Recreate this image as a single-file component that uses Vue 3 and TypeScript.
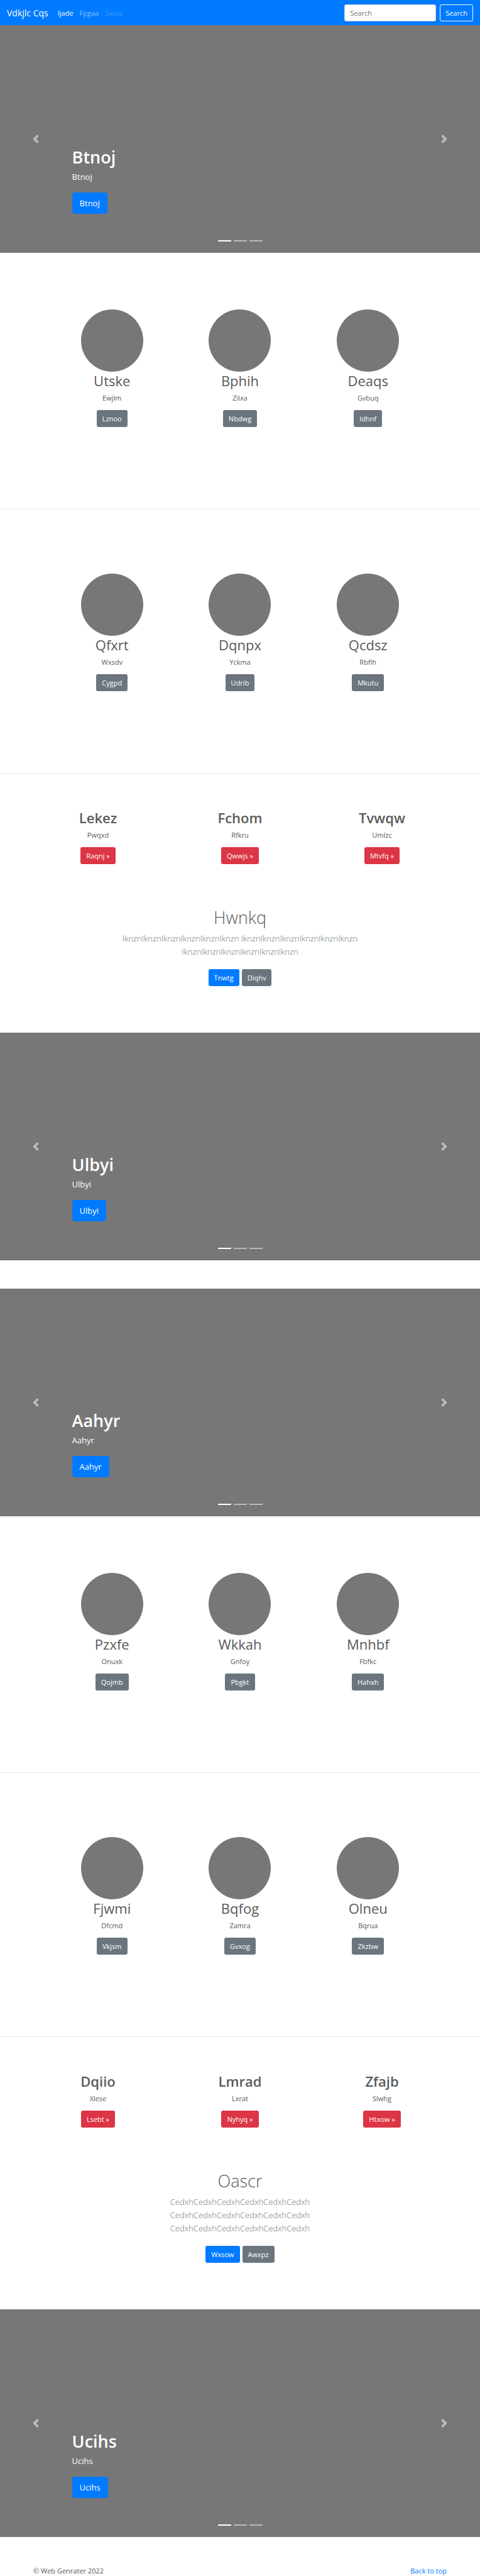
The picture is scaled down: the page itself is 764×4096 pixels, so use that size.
<script setup lang="ts">
import { ref } from 'vue'

interface Item {
  title: string
  text: string
  action: string
}

interface Lead {
  title: string
  text: string
  primary: string
  secondary: string
}

type Block =
  | { kind: 'hero'; title: string; spaced?: boolean }
  | { kind: 'features'; items: Item[]; first?: boolean }
  | { kind: 'cards'; items: Item[] }
  | { kind: 'lead'; lead: Lead }

const query = ref('')

const item = (title: string, text: string, action: string): Item => ({ title, text, action })

const blocks: Block[] = [
  { kind: 'hero', title: 'Btnoj' },
  {
    kind: 'features',
    first: true,
    items: [item('Utske', 'Ewjlm', 'Lznoo'), item('Bphih', 'Zilxa', 'Nbdwg'), item('Deaqs', 'Gvbuq', 'Idhnf')],
  },
  {
    kind: 'features',
    items: [item('Qfxrt', 'Wxsdv', 'Cygpd'), item('Dqnpx', 'Yckma', 'Udrib'), item('Qcdsz', 'Rbflh', 'Mkutu')],
  },
  {
    kind: 'cards',
    items: [item('Lekez', 'Pwqxd', 'Raqnj'), item('Fchom', 'Rfkru', 'Qwwjs'), item('Tvwqw', 'Umlzc', 'Mtvfq')],
  },
  {
    kind: 'lead',
    lead: {
      title: 'Hwnkq',
      text: Array(3).fill('Iknzn'.repeat(6)).join(' '),
      primary: 'Tnwtg',
      secondary: 'Diqhv',
    },
  },
  { kind: 'hero', title: 'Ulbyi', spaced: true },
  { kind: 'hero', title: 'Aahyr' },
  {
    kind: 'features',
    first: true,
    items: [item('Pzxfe', 'Onuxk', 'Qojmb'), item('Wkkah', 'Gnfoy', 'Pbgkt'), item('Mnhbf', 'Fbfkc', 'Hahxh')],
  },
  {
    kind: 'features',
    items: [item('Fjwmi', 'Dfcmd', 'Vkjsm'), item('Bqfog', 'Zamra', 'Gvxog'), item('Olneu', 'Bqrua', 'Zkzbw')],
  },
  {
    kind: 'cards',
    items: [item('Dqiio', 'Xlese', 'Lsebt'), item('Lmrad', 'Lxrat', 'Nyhyq'), item('Zfajb', 'Slwhg', 'Htxow')],
  },
  {
    kind: 'lead',
    lead: {
      title: 'Oascr',
      text: Array(3).fill('Cedxh'.repeat(6)).join(' '),
      primary: 'Wxsow',
      secondary: 'Awxpz',
    },
  },
  { kind: 'hero', title: 'Ucihs', spaced: true },
]
</script>

<template>
  <div id="top" class="page">
    <header class="navbar">
      <a class="brand" href="#">Vdkjlc Cqs</a>
      <nav class="links">
        <a class="active" href="#">Ijade</a>
        <a href="#">Fpgaa</a>
        <a class="disabled" href="#" aria-disabled="true">Svvza</a>
      </nav>
      <form class="search" role="search" @submit.prevent>
        <input v-model="query" type="search" placeholder="Search" aria-label="Search" />
        <button type="submit">Search</button>
      </form>
    </header>

    <main>
      <template v-for="(block, i) in blocks" :key="i">
        <section v-if="block.kind === 'hero'" class="hero" :class="{ spaced: block.spaced }">
          <button class="control" type="button" aria-label="Previous">
            <svg viewBox="0 0 8 8" fill="#fff"><path d="M5.25 0l-4 4 4 4 1.5-1.5L4.25 4l2.5-2.5L5.25 0z" /></svg>
          </button>
          <div class="caption">
            <h1>{{ block.title }}</h1>
            <p>{{ block.title }}</p>
            <a class="btn large primary" href="#">{{ block.title }}</a>
          </div>
          <button class="control" type="button" aria-label="Next">
            <svg viewBox="0 0 8 8" fill="#fff"><path d="M2.75 0l-1.5 1.5L3.75 4l-2.5 2.5L2.75 8l4-4-4-4z" /></svg>
          </button>
          <ol class="indicators">
            <li class="current"></li>
            <li></li>
            <li></li>
          </ol>
        </section>

        <section v-else-if="block.kind === 'features'" class="features" :class="{ first: block.first }">
          <article v-for="f in block.items" :key="f.title">
            <div class="avatar"></div>
            <h2>{{ f.title }}</h2>
            <p>{{ f.text }}</p>
            <a class="btn secondary" href="#">{{ f.action }}</a>
          </article>
        </section>

        <section v-else-if="block.kind === 'cards'" class="cards">
          <article v-for="c in block.items" :key="c.title">
            <h2>{{ c.title }}</h2>
            <p>{{ c.text }}</p>
            <a class="btn danger" href="#">{{ c.action }} »</a>
          </article>
        </section>

        <section v-else class="lead">
          <h1>{{ block.lead.title }}</h1>
          <p>{{ block.lead.text }}</p>
          <div class="actions">
            <a class="btn primary" href="#">{{ block.lead.primary }}</a>
            <a class="btn secondary" href="#">{{ block.lead.secondary }}</a>
          </div>
        </section>
      </template>
    </main>

    <footer>
      <span>© Web Genrater 2022</span>
      <a href="#top">Back to top</a>
    </footer>
  </div>
</template>

<style>
body {
  margin: 0;
  background: #fff;
}
</style>

<style scoped>
.page {
  font-family: "Segoe UI", "Open Sans", "Noto Sans", sans-serif;
  font-size: 11px;
  line-height: 17px;
  color: #5a5a5a;
}

.page * {
  box-sizing: border-box;
}

h1,
h2,
p,
ol {
  margin: 0;
  padding: 0;
}

a {
  color: #007bff;
  text-decoration: none;
}

input,
button {
  font: inherit;
}

.navbar {
  display: flex;
  align-items: center;
  height: 40px;
  padding: 0 11px;
  background: #007bff;
}

.brand {
  margin-right: 15px;
  font-size: 14px;
  line-height: 21px;
  color: #fff;
}

.links {
  display: flex;
  gap: 10px;
}

.links a {
  color: rgba(255, 255, 255, 0.5);
}

.links .active {
  color: #fff;
}

.links .disabled {
  color: rgba(255, 255, 255, 0.25);
}

.search {
  display: flex;
  gap: 6px;
  margin-left: auto;
}

.search input {
  width: 146px;
  height: 27px;
  padding: 0 8px;
  border: 1px solid #ced4da;
  border-radius: 3px;
  background: #fff;
  color: #495057;
  appearance: none;
}

.search input::placeholder {
  color: #6c757d;
  opacity: 1;
}

.search button {
  height: 27px;
  padding: 0 8px;
  border: 1px solid #f8f9fa;
  border-radius: 3px;
  background: transparent;
  color: #f8f9fa;
}

.hero {
  position: relative;
  display: flex;
  height: 362px;
  background: #777;
  color: #fff;
}

.hero.spaced {
  margin-bottom: 45px;
}

.control {
  display: flex;
  align-items: center;
  justify-content: center;
  width: 15%;
  padding: 0;
  border: 0;
  background: transparent;
  opacity: 0.5;
}

.control svg {
  width: 14px;
  height: 14px;
}

.caption {
  display: flex;
  flex: 1;
  flex-direction: column;
  align-items: flex-start;
  justify-content: flex-end;
  padding-bottom: 62px;
}

.caption h1 {
  margin-bottom: 4px;
  font-size: 27px;
  font-weight: 600;
  line-height: 34px;
}

.caption p {
  margin-bottom: 14px;
  font-size: 13px;
  line-height: 21px;
}

.indicators {
  position: absolute;
  right: 0;
  bottom: 18px;
  left: 0;
  display: flex;
  justify-content: center;
  gap: 4px;
  list-style: none;
}

.indicators li {
  width: 21px;
  height: 2px;
  background: #fff;
  opacity: 0.5;
}

.indicators .current {
  opacity: 1;
}

.btn {
  display: inline-block;
  padding: 5px 9px;
  border-radius: 3px;
  line-height: 17px;
  color: #fff;
}

.btn.large {
  padding: 6px 12px;
  border-radius: 4px;
  font-size: 13px;
  line-height: 22px;
}

.primary {
  background: #007bff;
}

.secondary {
  background: #6c757d;
}

.danger {
  background: #dc3545;
}

.features,
.cards {
  display: grid;
  grid-template-columns: repeat(3, 1fr);
  text-align: center;
}

.features {
  padding: 102px 10% 130px;
  border-bottom: 1px solid #e6e6e6;
}

.features.first {
  padding-top: 90px;
}

.avatar {
  width: 99px;
  height: 99px;
  margin: 0 auto;
  border-radius: 50%;
  background: #777;
}

.features h2,
.cards h2 {
  margin: 1px 0 5px;
  font-size: 22px;
  font-weight: 400;
  line-height: 27px;
}

.cards h2 {
  font-weight: 600;
}

.features p,
.cards p {
  margin-bottom: 11px;
}

.cards {
  padding: 56px 43px 68px;
}

.lead {
  max-width: 430px;
  margin: 0 auto;
  padding-bottom: 74px;
  text-align: center;
}

.lead h1 {
  margin-bottom: 6px;
  font-size: 27px;
  font-weight: 300;
  line-height: 34px;
}

.lead p {
  margin-bottom: 17px;
  font-size: 13px;
  font-weight: 300;
  line-height: 21px;
  color: #6c757d;
}

.actions {
  display: flex;
  justify-content: center;
  gap: 4px;
}

footer {
  display: flex;
  justify-content: space-between;
  padding: 0 53px;
}
</style>
